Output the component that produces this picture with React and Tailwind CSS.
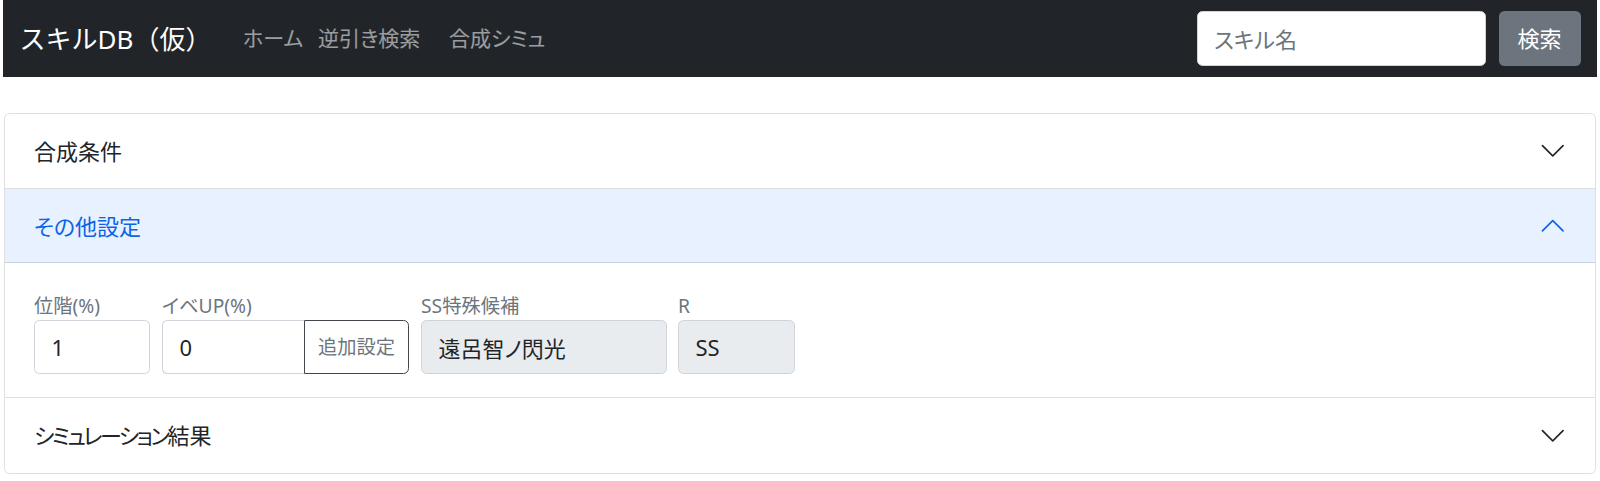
import React from 'react';

const font = "font-['Noto_Sans','Noto_Sans_CJK_JP',sans-serif] [font-feature-settings:'palt']";

const Chevron = ({ up = false }) => (
  <svg
    viewBox="0 0 16 16"
    fill="currentColor"
    className={up ? 'w-[27.5px] h-[27.5px] shrink-0 rotate-180' : 'w-[27.5px] h-[27.5px] shrink-0'}
  >
    <path
      fillRule="evenodd"
      d="M1.646 4.646a.5.5 0 0 1 .708 0L8 10.293l5.646-5.647a.5.5 0 0 1 .708.708l-6 6a.5.5 0 0 1-.708 0l-6-6a.5.5 0 0 1 0-.708z"
    />
  </svg>
);

const Header = ({ title, open = false, className = '' }) => (
  <button
    type="button"
    className={
      open
        ? `w-full h-[74px] flex items-center pl-[29px] pr-[28.5px] text-[22px] text-left bg-[#e7f1ff] text-[#0c63e4] shadow-[inset_0_-1px_0_rgba(0,0,0,0.125)] ${className}`
        : `w-full h-[75px] flex items-center pl-[29px] pr-[28.5px] text-[22px] text-left text-[#212529] ${className}`
    }
  >
    <span className="flex-1">{title}</span>
    <Chevron up={open} />
  </button>
);

const Field = ({ label, className = '', children }) => (
  <div className={`flex flex-col ${className}`}>
    <label className="text-[19.25px] leading-[29px] text-[#6c757d]">{label}</label>
    {children}
  </div>
);

export default function App() {
  return (
    <div className={`min-h-screen bg-white ${font}`}>
      {/* Navbar */}
      <nav className="mx-[3px] h-[77px] bg-[#212529] flex items-center px-[16.5px]">
        <span className="w-[223.5px] shrink-0 text-white text-[26px] leading-none [font-feature-settings:normal]">
          スキルDB（仮）
        </span>
        <div className="flex items-center text-[21px] text-white/55">
          <a className="w-[75px] shrink-0">ホーム</a>
          <a className="w-[131px] shrink-0">逆引き検索</a>
          <a>合成シミュ</a>
        </div>
        <div className="ml-auto flex items-center gap-[13px]">
          <input
            placeholder="スキル名"
            className="w-[289px] shrink-0 h-[55px] rounded-[5.5px] bg-white border border-[#ced4da] px-[16.5px] text-[22px] text-[#212529] placeholder:text-[#6c757d] outline-none"
          />
          <button
            type="button"
            className="w-[82px] shrink-0 h-[55px] rounded-[5.5px] bg-[#6c757d] text-white text-[22px]"
          >
            検索
          </button>
        </div>
      </nav>

      {/* Accordion */}
      <div className="pt-[36px] px-[4px]">
        <div className="border border-[#dfdfdf] rounded-[5.5px] overflow-hidden">
          <Header title="合成条件" className="border-b border-[#dfdfdf]" />

          <Header title="その他設定" open />
          <div className="pt-[28px] pb-[23px] pl-[29px] border-b border-[#dfdfdf] flex items-start gap-[12px]">
            <Field label="位階(%)">
              <input
                defaultValue="1"
                className="w-[116px] h-[54px] rounded-[5.5px] border border-[#ced4da] px-[16.5px] text-[22px] text-[#212529] outline-none"
              />
            </Field>
            <Field label="イベUP(%)">
              <div className="flex">
                <input
                  defaultValue="0"
                  className="w-[142px] h-[54px] rounded-l-[5.5px] border border-r-0 border-[#ced4da] px-[16.5px] text-[22px] text-[#212529] outline-none"
                />
                <button
                  type="button"
                  className="w-[105px] h-[54px] rounded-r-[5.5px] border border-[#40464c] bg-white text-[19.25px] text-[#6c757d]"
                >
                  追加設定
                </button>
              </div>
            </Field>
            <Field label="SS特殊候補">
              <input
                readOnly
                value="遠呂智ノ閃光"
                className="w-[246px] h-[54px] rounded-[5.5px] border border-[#ced4da] bg-[#e9ecef] px-[16.5px] text-[22px] text-[#212529] outline-none"
              />
            </Field>
            <Field label="R" className="-ml-[1px]">
              <input
                readOnly
                value="SS"
                className="w-[117px] h-[54px] rounded-[5.5px] border border-[#ced4da] bg-[#e9ecef] px-[16.5px] text-[22px] text-[#212529] outline-none"
              />
            </Field>
          </div>

          <Header
            title={
              <>
                <span className="tracking-[-2.5px]">シミュレーション</span>結果
              </>
            }
          />
        </div>
      </div>
    </div>
  );
}
